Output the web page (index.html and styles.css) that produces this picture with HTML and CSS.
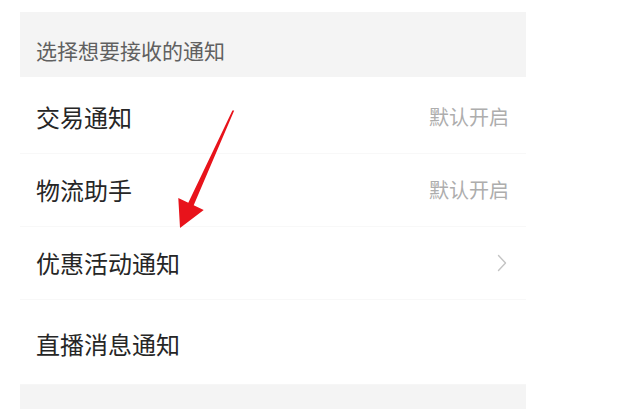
FILE: index.html
```html
<!DOCTYPE html>
<html lang="zh-CN">
<head>
<meta charset="utf-8">
<title>通知设置</title>
<link rel="stylesheet" href="styles.css">
</head>
<body>
<div class="page">
  <div class="panel">
    <div class="section-head">选择想要接收的通知</div>
    <ul class="list">
      <li class="row"><span class="label">交易通知</span><span class="value">默认开启</span></li>
      <li class="row"><span class="label">物流助手</span><span class="value">默认开启</span></li>
      <li class="row"><span class="label">优惠活动通知</span>
        <svg class="chevron" viewBox="0 0 10 18" width="10" height="18"><path d="M1.5 1.5 L8.5 9 L1.5 16.5" fill="none" stroke="#c4c4c4" stroke-width="1.4" stroke-linecap="round" stroke-linejoin="round"/></svg>
      </li>
      <li class="row row-last"><span class="label">直播消息通知</span></li>
    </ul>
    <div class="section-foot"></div>
  </div>
  <svg class="arrow" viewBox="0 0 632 414" width="632" height="414">
    <path d="M234.2 110.5 L193.7 205.3 L203.7 209.9 L180 228 L178.3 198.1 L188.3 202.7 L232.4 110.5 Z" fill="#e8131b"/>
  </svg>
</div>
</body>
</html>
```
FILE: styles.css
```css
html, body {
  margin: 0;
  padding: 0;
  background: #ffffff;
}
body {
  font-family: "Noto Sans CJK SC", "Noto Sans", sans-serif;
}
.page {
  position: relative;
  width: 632px;
  height: 414px;
  overflow: hidden;
}
.panel {
  width: 506px;
  margin-left: 20px;
  padding-top: 12px;
}
.section-head {
  box-sizing: border-box;
  height: 65px;
  background: #f4f4f4;
  padding: 28px 0 0 16px;
  font-size: 21px;
  line-height: 20px;
  color: #606060;
}
.list {
  list-style: none;
  margin: 0;
  padding: 4px 0 0 0;
}
.row {
  box-sizing: border-box;
  height: 73px;
  display: flex;
  align-items: center;
  justify-content: space-between;
  padding: 0 17px 0 16px;
  border-bottom: 1px solid #f8f8f8;
}
.row-last {
  height: 85px;
  padding-top: 3px;
  border-bottom-color: #f6f6f6;
}
.label {
  font-size: 24px;
  line-height: 24px;
  color: #262626;
}
.value {
  font-size: 20px;
  line-height: 20px;
  color: #adadad;
}
.chevron {
  display: block;
  margin-right: 2px;
}
.section-foot {
  height: 24px;
  background: #f4f4f4;
}
.arrow {
  position: absolute;
  left: 0;
  top: 0;
  pointer-events: none;
}
```
